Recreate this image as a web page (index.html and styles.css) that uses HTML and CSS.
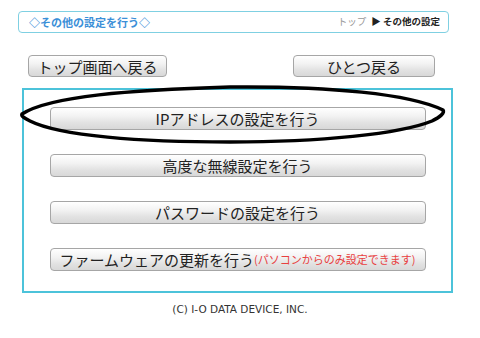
FILE: index.html
```html
<!DOCTYPE html>
<html lang="ja">
<head>
<meta charset="utf-8">
<title>その他の設定</title>
<link rel="stylesheet" href="styles.css">
</head>
<body>
<div class="page">
  <div class="header">
    <span class="title">◇その他の設定を行う◇</span>
    <span class="crumbs"><span class="crumb-link">トップ</span><span class="crumb-now">▶ その他の設定</span></span>
  </div>
  <div class="nav">
    <button class="btn btn-top">トップ画面へ戻る</button>
    <button class="btn btn-back">ひとつ戻る</button>
  </div>
  <div class="main">
    <button class="btn btn-wide">IPアドレスの設定を行う</button>
    <button class="btn btn-wide">高度な無線設定を行う</button>
    <button class="btn btn-wide">パスワードの設定を行う</button>
    <button class="btn btn-wide btn-fw">ファームウェアの更新を行う<span class="note">(パソコンからのみ設定できます)</span></button>
  </div>
  <div class="copy">(C) I-O DATA DEVICE, INC.</div>
  <svg class="circle" width="480" height="338" viewBox="0 0 480 338">
    <path d="M22,114 C50,96 130,90 230,87 C330,86 410,94 443,110 C445,113 440,117 432,121 C400,134 320,142 230,142 C140,142 60,136 30,121 C24,118 21,116 22,114 Z" fill="none" stroke="#000" stroke-width="3.5"/>
  </svg>
</div>
</body>
</html>
```
FILE: styles.css
```css
html, body {
  margin: 0;
  padding: 0;
  background: #fff;
}
.page {
  position: relative;
  width: 480px;
  height: 338px;
  padding-top: 11px;
  box-sizing: border-box;
  font-family: "Noto Sans CJK JP", "Noto Sans", sans-serif;
  color: #333;
}
.header {
  margin-left: 18px;
  width: 431px;
  height: 22px;
  box-sizing: border-box;
  border: 1px solid #7fd0e2;
  border-radius: 4px;
  display: flex;
  align-items: center;
  justify-content: space-between;
  padding: 0 8px 0 10px;
}
.title {
  font-size: 11px;
  font-weight: bold;
  color: #3b8fd8;
  line-height: 1;
}
.crumbs {
  font-size: 9.5px;
  line-height: 1;
  display: flex;
  gap: 5px;
}
.crumb-link {
  color: #999;
}
.crumb-now {
  color: #222;
  font-weight: bold;
}
.nav {
  display: flex;
  margin-top: 22px;
  padding-left: 28px;
  gap: 126px;
}
.btn {
  font-family: "Noto Sans CJK JP", "Noto Sans", sans-serif;
  font-weight: 400;
  color: #222;
  border: 1px solid #a6a6a6;
  border-radius: 4px;
  background: linear-gradient(to bottom, #ffffff 0%, #f2f2f2 40%, #e2e2e2 70%, #d8d8d8 100%);
  padding: 0;
  margin: 0;
  display: flex;
  align-items: center;
  justify-content: center;
  line-height: 1;
  box-sizing: border-box;
}
.btn-top {
  width: 139px;
  height: 22px;
  font-size: 15px;
}
.btn-back {
  width: 142px;
  height: 22px;
  font-size: 15px;
}
.main {
  margin-top: 11px;
  margin-left: 22px;
  width: 431px;
  height: 205px;
  box-sizing: border-box;
  border: 2px solid #4cc3da;
  display: flex;
  flex-direction: column;
  align-items: center;
  padding-top: 17px;
  gap: 24px;
}
.btn-wide {
  width: 376px;
  height: 23px;
  font-size: 15px;
}
.note {
  color: #e8403f;
  font-size: 11px;
}
.copy {
  margin-top: 10px;
  text-align: center;
  font-size: 10.5px;
  color: #333;
  font-family: "DejaVu Sans", sans-serif;
}
.circle {
  position: absolute;
  left: 0;
  top: 0;
  pointer-events: none;
}
```
